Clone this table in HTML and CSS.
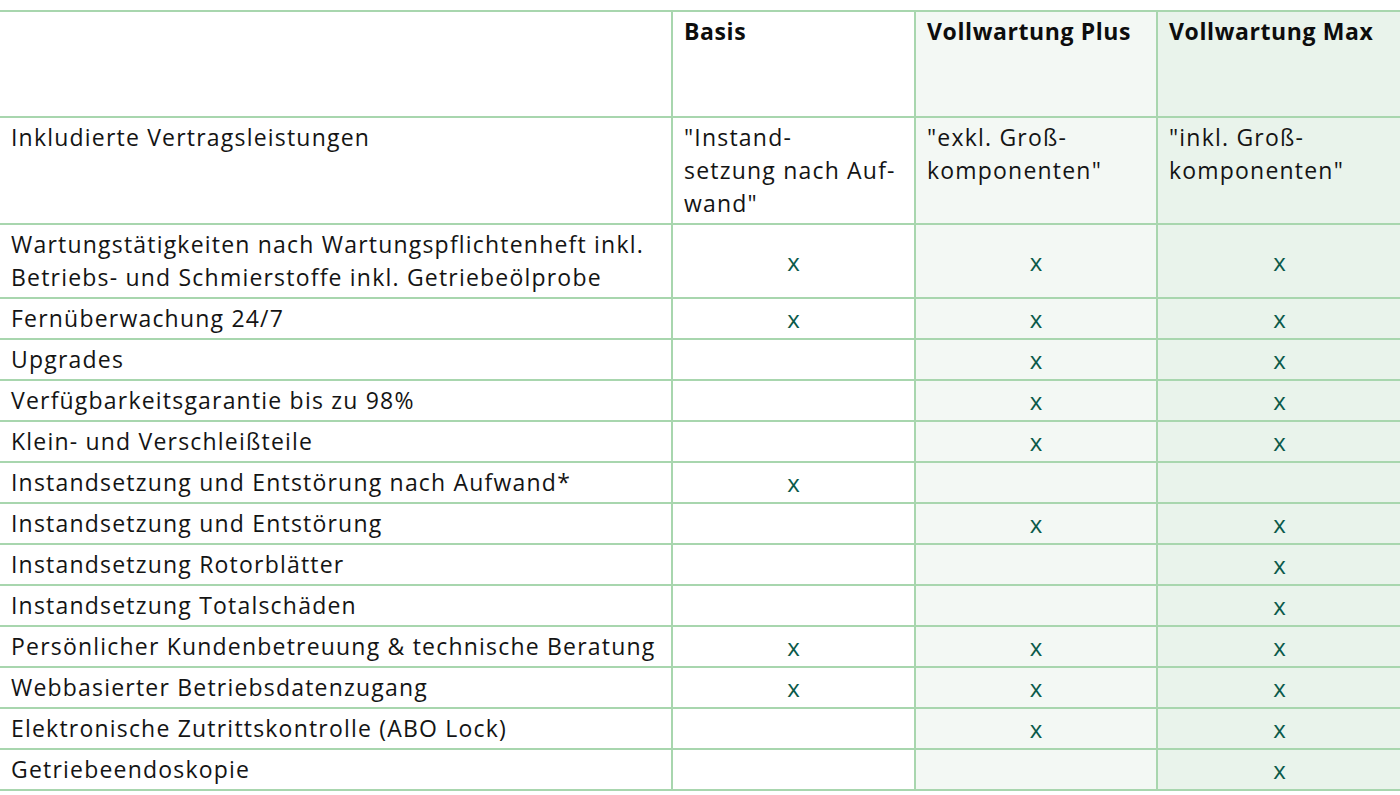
FILE: index.html
```html
<!DOCTYPE html>
<html lang="de">
<head>
<meta charset="utf-8">
<link rel="stylesheet" href="styles.css">
</head>
<body>
<table class="cmp">
  <colgroup>
    <col class="c-label">
    <col class="c-basis">
    <col class="c-plus">
    <col class="c-max">
  </colgroup>
  <thead>
    <tr class="head">
      <th></th>
      <th>Basis</th>
      <th class="plus">Vollwartung Plus</th>
      <th class="max">Vollwartung Max</th>
    </tr>
  </thead>
  <tbody>
    <tr class="intro">
      <td>Inkludierte Vertragsleistungen</td>
      <td>"Instand-<br>setzung nach Auf-<br>wand"</td>
      <td class="plus">"exkl. Groß-<br>komponenten"</td>
      <td class="max">"inkl. Groß-<br>komponenten"</td>
    </tr>
    <tr>
      <td>Wartungstätigkeiten nach Wartungspflichtenheft inkl.<br>Betriebs- und Schmierstoffe inkl. Getriebeölprobe</td>
      <td class="mark">x</td><td class="mark plus">x</td><td class="mark max">x</td>
    </tr>
    <tr>
      <td>Fernüberwachung 24/7</td>
      <td class="mark">x</td><td class="mark plus">x</td><td class="mark max">x</td>
    </tr>
    <tr>
      <td>Upgrades</td>
      <td class="mark"></td><td class="mark plus">x</td><td class="mark max">x</td>
    </tr>
    <tr>
      <td>Verfügbarkeitsgarantie bis zu 98%</td>
      <td class="mark"></td><td class="mark plus">x</td><td class="mark max">x</td>
    </tr>
    <tr>
      <td>Klein- und Verschleißteile</td>
      <td class="mark"></td><td class="mark plus">x</td><td class="mark max">x</td>
    </tr>
    <tr>
      <td>Instandsetzung und Entstörung nach Aufwand*</td>
      <td class="mark">x</td><td class="mark plus"></td><td class="mark max"></td>
    </tr>
    <tr>
      <td>Instandsetzung und Entstörung</td>
      <td class="mark"></td><td class="mark plus">x</td><td class="mark max">x</td>
    </tr>
    <tr>
      <td>Instandsetzung Rotorblätter</td>
      <td class="mark"></td><td class="mark plus"></td><td class="mark max">x</td>
    </tr>
    <tr>
      <td>Instandsetzung Totalschäden</td>
      <td class="mark"></td><td class="mark plus"></td><td class="mark max">x</td>
    </tr>
    <tr>
      <td>Persönlicher Kundenbetreuung &amp; technische Beratung</td>
      <td class="mark">x</td><td class="mark plus">x</td><td class="mark max">x</td>
    </tr>
    <tr>
      <td>Webbasierter Betriebsdatenzugang</td>
      <td class="mark">x</td><td class="mark plus">x</td><td class="mark max">x</td>
    </tr>
    <tr>
      <td>Elektronische Zutrittskontrolle (ABO Lock)</td>
      <td class="mark"></td><td class="mark plus">x</td><td class="mark max">x</td>
    </tr>
    <tr>
      <td>Getriebeendoskopie</td>
      <td class="mark"></td><td class="mark plus"></td><td class="mark max">x</td>
    </tr>
  </tbody>
</table>
</body>
</html>
```

FILE: styles.css
```css
html, body {
  margin: 0;
  padding: 0;
  background: #ffffff;
}
body {
  padding-top: 10px;
  font-family: "Open Sans", "Noto Sans", sans-serif;
  font-size: 23px;
  color: #141414;
  overflow: hidden;
}
.cmp {
  border-collapse: collapse;
  table-layout: fixed;
  width: 1401px;
}
.c-label { width: 672px; }
.c-basis { width: 243px; }
.c-plus { width: 242px; }
.c-max { width: 244px; }
.cmp th,
.cmp td {
  border: 2px solid #a8d6ae;
  padding: 3px 8px 3px 11px;
  line-height: 33px;
  text-align: left;
  vertical-align: top;
  font-weight: 400;
  letter-spacing: 1.2px;
}
.cmp tr > :first-child { border-left: none; }
.cmp tr > :last-child { border-right: none; }
.cmp .head th {
  height: 98px;
  font-weight: 700;
  letter-spacing: 0.6px;
  padding-top: 3px;
  color: #0d0d0d;
}
.cmp .plus { background: #f3f8f4; }
.cmp .max { background: #e9f3eb; }
.cmp td.mark {
  text-align: center;
  vertical-align: middle;
  color: #0b5a4a;
  font-size: 24px;
  padding-left: 0;
  padding-right: 0;
  letter-spacing: 0;
}
```
